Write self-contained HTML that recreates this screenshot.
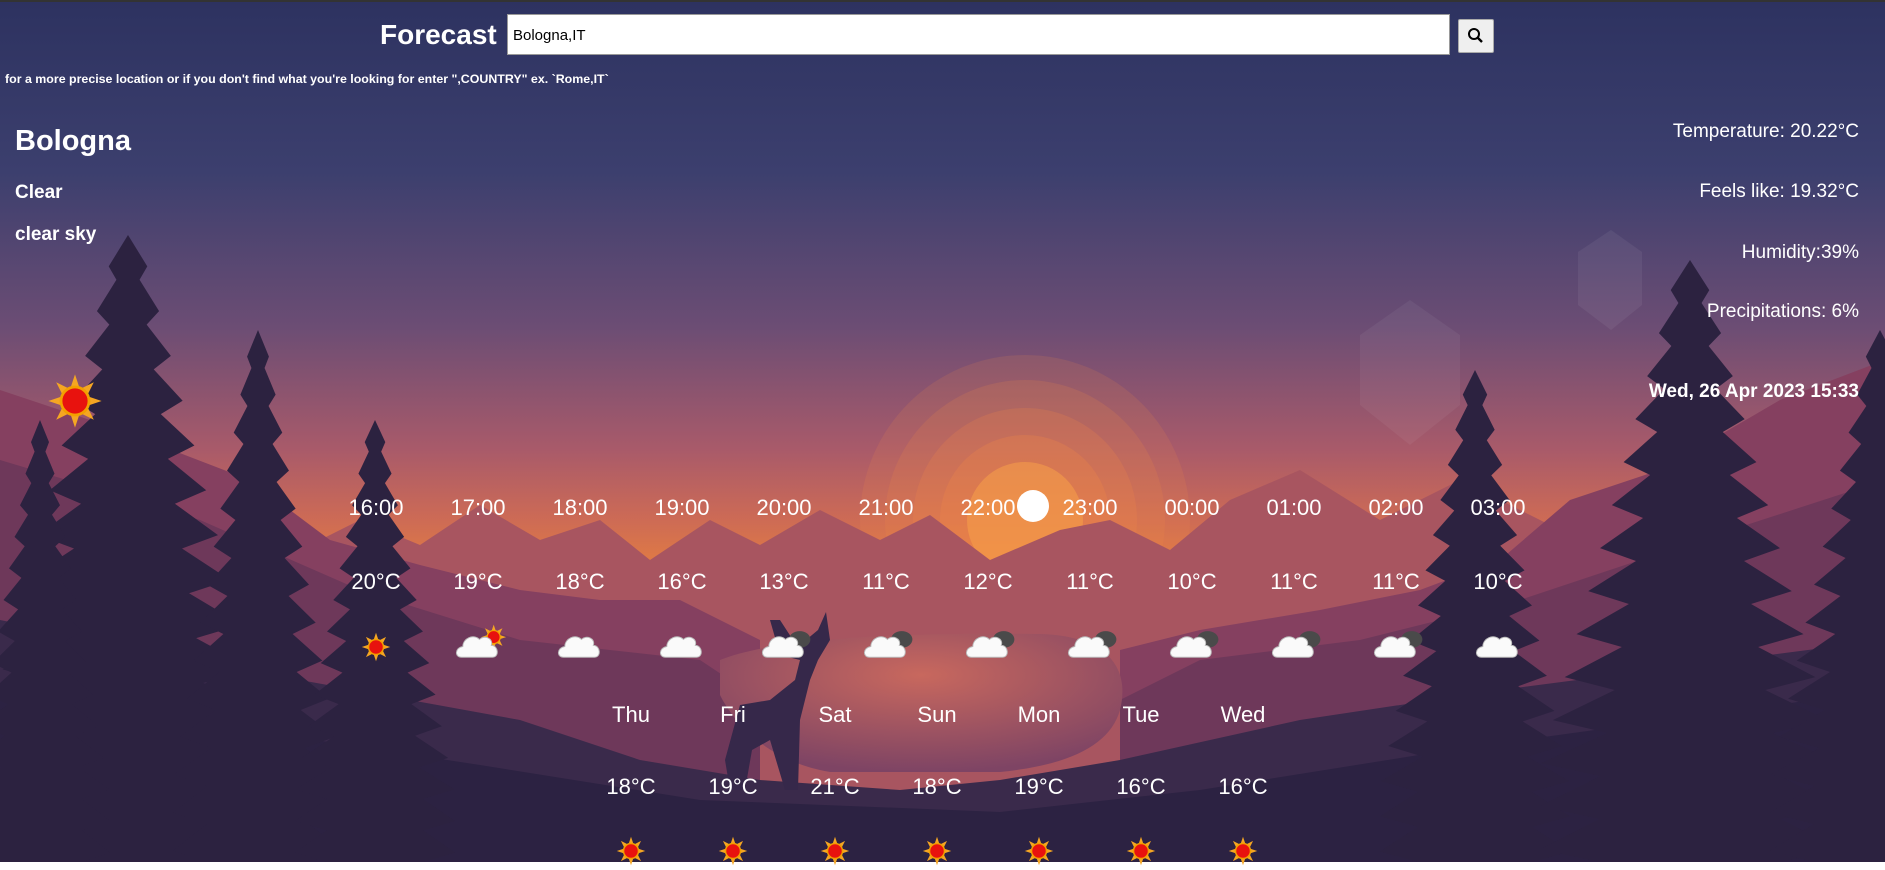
<!DOCTYPE html>
<html><head><meta charset="utf-8"><style>
html,body{margin:0;padding:0;width:1885px;height:862px;overflow:hidden;font-family:"Liberation Sans",Arial,sans-serif;color:#fff}
#bg{position:absolute;left:0;top:0}
.t{position:absolute;white-space:nowrap;line-height:1}
.c{transform:translateX(-50%)}
.r{right:26px;text-align:right}
</style></head><body>
<svg id="bg" width="1885" height="862" viewBox="0 0 1885 862">
<defs>
<linearGradient id="sky" x1="0" y1="0" x2="0" y2="1">
<stop offset="0" stop-color="#2d3260"/>
<stop offset="0.2" stop-color="#3c3f6e"/>
<stop offset="0.38" stop-color="#6c4d74"/>
<stop offset="0.52" stop-color="#a85a6a"/>
<stop offset="0.6" stop-color="#cc6a56"/>
<stop offset="0.66" stop-color="#e27c42"/>
<stop offset="1" stop-color="#e27c42"/>
</linearGradient>
<radialGradient id="lake" cx="0.5" cy="0.3" r="0.7">
<stop offset="0" stop-color="#c8685e"/><stop offset="1" stop-color="#7e4464"/>
</radialGradient>
</defs>
<rect width="1885" height="862" fill="url(#sky)"/>
<g fill="#f08a48">
<circle cx="1025" cy="520" r="165" opacity="0.15"/>
<circle cx="1025" cy="520" r="140" opacity="0.18"/>
<circle cx="1025" cy="520" r="112" opacity="0.22"/>
<circle cx="1025" cy="520" r="85" opacity="0.28"/>
<circle cx="1025" cy="520" r="58" fill="#f8a048" opacity="0.55"/>
</g>
<polygon points="1611,230 1642,252 1642,305 1611,330 1578,305 1578,252" fill="#fff" opacity="0.06"/>
<polygon points="1410,300 1460,335 1460,405 1410,445 1360,405 1360,335" fill="#fff" opacity="0.05"/>
<!-- back mountains -->
<polygon fill="#a85560" points="280,560 360,520 420,545 480,505 540,540 600,520 650,560 710,520 760,545 820,510 880,540 930,515 990,560 1060,530 1110,520 1170,550 1230,500 1300,470 1380,520 1460,480 1560,530 1560,862 280,862"/>
<polygon fill="#854060" points="0,390 120,430 250,480 330,540 420,565 520,590 600,600 680,600 720,620 760,640 760,862 0,862"/>
<polygon fill="#854060" points="1885,360 1780,400 1660,470 1570,500 1500,560 1420,590 1320,610 1200,630 1120,650 1120,862 1885,862"/>
<polygon fill="#6e385a" points="0,460 200,520 360,590 520,640 700,660 760,700 760,862 0,862"/>
<polygon fill="#6e385a" points="1885,480 1700,540 1520,600 1360,640 1200,660 1120,700 1120,862 1885,862"/>
<!-- lake -->
<path d="M720,660 C770,640 880,632 1040,634 C1110,636 1130,670 1120,710 C1110,745 1070,765 1000,772 L830,772 C770,762 735,725 720,695 Z" fill="url(#lake)"/>
<!-- foreground -->
<path fill="#3a2a4b" d="M0,620 L300,680 L520,720 L640,760 L760,780 L900,790 L1000,780 L1120,760 L1300,720 L1500,690 L1885,640 L1885,862 L0,862Z"/>
<path fill="#2c2242" d="M0,690 L250,730 L480,765 L700,800 L1000,812 L1200,790 L1450,750 L1885,690 L1885,862 L0,862Z"/>
<!-- deer -->
<path fill="#36284a" d="M770,620 L780,655 L800,660 L795,680 L770,700 L740,705 L725,760 L730,790 L745,790 L752,750 L770,740 L785,790 L798,790 L800,720 L810,680 L818,660 L830,640 L826,612 L818,630 L806,640 L793,640 L780,620 Z"/>
<g id="trees" fill="#2c2240"></g>
</svg>

<div class="t" style="left:0;top:0;width:1885px;height:2px;background:#333"></div>
<div class="t" style="left:380px;top:21px;font-size:28px;font-weight:bold">Forecast</div>
<div class="t" style="left:507px;top:14px;width:941px;height:39px;background:#fff;border:1px solid #999"></div>
<div class="t" style="left:513px;top:28px;font-size:15px;color:#000">Bologna,IT</div>
<div class="t" style="left:1458px;top:19px;width:34px;height:32px;background:#efefef;border:1px solid #aaa;border-radius:2px">
<svg width="34" height="32"><circle cx="15" cy="14" r="5" fill="none" stroke="#000" stroke-width="2"/><line x1="18.5" y1="17.5" x2="23" y2="22" stroke="#000" stroke-width="2.4"/></svg></div>
<div class="t" style="left:5px;top:73px;font-size:12.4px;font-weight:bold">for a more precise location or if you don't find what you're looking for enter ",COUNTRY" ex. `Rome,IT`</div>

<div class="t" style="left:15px;top:127px;font-size:29px;font-weight:bold">Bologna</div>
<div class="t" style="left:15px;top:183px;font-size:19px;font-weight:bold">Clear</div>
<div class="t" style="left:15px;top:225px;font-size:19px;font-weight:bold">clear sky</div>

<div class="t r" style="top:122px;font-size:19px">Temperature: 20.22°C</div>
<div class="t r" style="top:182px;font-size:19px">Feels like: 19.32°C</div>
<div class="t r" style="top:243px;font-size:19px">Humidity:39%</div>
<div class="t r" style="top:302px;font-size:19px">Precipitations: 6%</div>
<div class="t r" style="top:382px;font-size:19px;font-weight:bold">Wed, 26 Apr 2023 15:33</div>

<div class="t" style="left:1017px;top:490px;width:32px;height:32px;border-radius:50%;background:#fff"></div>
<div id="dyn"></div>

<script>
var g=document.getElementById('trees'),ns='http://www.w3.org/2000/svg';
function tree(cx,top,w){var pts=[],n=14,h=862-top;pts.push(cx+','+top);
for(var i=1;i<=n;i++){var y=top+h*i/n,ww=w*Math.min(1,i/n*1.1+0.05)/2;pts.push((cx+ww)+','+(y-h/n*0.3));pts.push((cx+ww*0.6)+','+(y));}
pts.push((cx+14)+',862');pts.push((cx-14)+',862');
for(var i=n;i>=1;i--){var y=top+h*i/n,ww=w*Math.min(1,i/n*1.1+0.05)/2;pts.push((cx-ww*0.6)+','+y);pts.push((cx-ww)+','+(y-h/n*0.3));}
var p=document.createElementNS(ns,'polygon');p.setAttribute('points',pts.join(' '));g.appendChild(p);}
tree(128,235,300);tree(258,330,170);tree(375,420,160);tree(1475,370,190);tree(1690,260,300);tree(1880,330,220);tree(40,420,140);
function sun(s){return '<svg width="'+s+'" height="'+s+'" viewBox="0 0 40 40"><g fill="#f5a623">'+
[0,45,90,135,180,225,270,315].map(function(a){return '<polygon points="20,1 23,10 17,10" transform="rotate('+a+' 20 20)"/>'}).join('')+
'</g><circle cx="20" cy="20" r="11" fill="#f3a000"/><circle cx="20" cy="20" r="9" fill="#e8120e"/></svg>';}
function cloud(dark,sunny){return '<svg width="58" height="38" viewBox="0 0 48 32">'+
(sunny?'<g transform="translate(22,0) scale(0.55)"><g fill="#f5a623">'+[0,45,90,135,180,225,270,315].map(function(a){return '<polygon points="20,1 23,10 17,10" transform="rotate('+a+' 20 20)"/>'}).join('')+'</g><circle cx="20" cy="20" r="11" fill="#f3a000"/><circle cx="20" cy="20" r="9" fill="#e8120e"/></g>':'')+
(dark?'<ellipse cx="33" cy="13" rx="9" ry="7" fill="#4a4a4a"/>':'')+
'<path d="M6,28 C0,28 0,20 7,19 C7,12 16,8 21,13 C25,9 33,12 31,18 C37,18 38,28 32,28Z" fill="#fafafa" stroke="#bbb" stroke-width="0.8"/></svg>';}
var hours=['16:00','17:00','18:00','19:00','20:00','21:00','22:00','23:00','00:00','01:00','02:00','03:00'];
var ht=['20°C','19°C','18°C','16°C','13°C','11°C','12°C','11°C','10°C','11°C','11°C','10°C'];
var days=['Thu','Fri','Sat','Sun','Mon','Tue','Wed'],dt=['18°C','19°C','21°C','18°C','19°C','16°C','16°C'];
var h='';
hours.forEach(function(x,i){var cx=376+102*i;
h+='<div class="t c" style="left:'+cx+'px;top:497px;font-size:22px">'+x+'</div>';
h+='<div class="t c" style="left:'+cx+'px;top:571px;font-size:22px">'+ht[i]+'</div>';
var ic=i==0?sun(30):cloud(i>=4&&i<=10,i==1);
h+='<div class="t c" style="left:'+(cx+(i==0?0:5))+'px;top:'+(i==0?632:624)+'px">'+ic+'</div>';});
days.forEach(function(x,i){var cx=631+102*i;
h+='<div class="t c" style="left:'+cx+'px;top:704px;font-size:22px">'+x+'</div>';
h+='<div class="t c" style="left:'+cx+'px;top:776px;font-size:22px">'+dt[i]+'</div>';
h+='<div class="t c" style="left:'+cx+'px;top:836px">'+sun(30)+'</div>';});
h+='<div class="t c" style="left:75px;top:373px">'+sun(56)+'</div>';
document.getElementById('dyn').innerHTML=h;
</script>
</body></html>
